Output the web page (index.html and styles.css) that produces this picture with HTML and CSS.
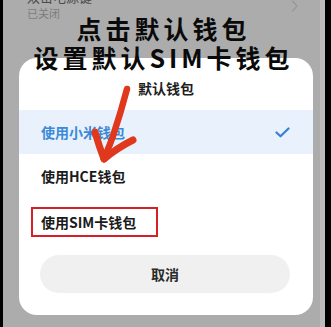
FILE: index.html
```html
<!DOCTYPE html>
<html lang="zh">
<head>
<meta charset="utf-8">
<title>默认钱包</title>
<link rel="stylesheet" href="styles.css">
</head>
<body>
<div class="screen">
  <div class="setting">
    <div class="setting-text">
      <div class="setting-title">双击电源键</div>
      <div class="setting-sub">已关闭</div>
    </div>
    <svg class="chevron" width="8" height="12" viewBox="0 0 8 12"><path d="M1.5 1 L6 6 L1.5 11" fill="none" stroke="#9a9a9a" stroke-width="1.6" stroke-linecap="round" stroke-linejoin="round"/></svg>
  </div>

  <div class="card">
    <div class="card-title">默认钱包</div>
    <div class="options">
      <div class="option selected">
        <span>使用小米钱包</span>
        <svg class="check" width="15" height="11" viewBox="0 0 15 11"><path d="M1.5 5.5 L5.5 9.3 L13.5 1.5" fill="none" stroke="#3a7fd4" stroke-width="2.2" stroke-linecap="round" stroke-linejoin="round"/></svg>
      </div>
      <div class="option"><span>使用HCE钱包</span></div>
      <div class="option"><span class="boxed">使用SIM卡钱包</span></div>
    </div>
    <div class="cancel">取消</div>
  </div>

  <div class="caption">
    <div>点击默认钱包</div>
    <div>设置默认SIM卡钱包</div>
  </div>

  <svg class="arrow" width="331" height="327" viewBox="0 0 331 327">
    <path d="M127 89 Q121 112 113 136 Q108 150 104 158" fill="none" stroke="#e0381c" stroke-width="6.5" stroke-linecap="round"/>
    <path d="M95 132 Q99 146 104 159" fill="none" stroke="#e0381c" stroke-width="7" stroke-linecap="round"/>
    <path d="M133 140 Q117 148 104 159" fill="none" stroke="#e0381c" stroke-width="7" stroke-linecap="round"/>
  </svg>
</div>
</body>
</html>
```

FILE: styles.css
```css
html, body {
  margin: 0;
  padding: 0;
}
body {
  width: 331px;
  height: 327px;
  background: #000;
  overflow: hidden;
  font-family: "Noto Sans CJK SC", "Noto Sans", sans-serif;
}
.screen {
  position: relative;
  margin-left: 3px;
  width: 317px;
  height: 327px;
  background: #acacac;
  border-right: 5px solid #bcbcbc;
}
.setting {
  display: flex;
  justify-content: space-between;
  align-items: flex-start;
  padding: 0 21px 0 24px;
  height: 58px;
}
.setting-text {
  margin-top: -12px;
}
.setting-title {
  font-size: 13px;
  line-height: 18px;
  color: #4a4a4a;
}
.setting-sub {
  font-size: 11px;
  line-height: 14px;
  color: #7c7c7c;
}
.card {
  margin-left: 16px;
  width: 294px;
  height: 257px;
  background: #fff;
  border-radius: 18px;
  display: flex;
  flex-direction: column;
}
.card-title {
  padding: 20px 0 12px;
  line-height: 20px;
  text-align: center;
  font-size: 14px;
  font-weight: 700;
  color: #1e1e1e;
}
.option {
  height: 44px;
  display: flex;
  align-items: center;
  justify-content: space-between;
  padding: 0 23px 0 22px;
  font-size: 14px;
  font-weight: 700;
  color: #1a1a1a;
}
.option.selected {
  background: #e8f1fc;
  color: #3b8ad8;
}
.boxed {
  margin-left: -10px;
  margin-top: 3px;
  padding: 4px 20px 4px 8px;
  border: 2px solid #d3202a;
  line-height: 18px;
}
.cancel {
  margin: 13px 23px 0 21px;
  height: 38px;
  border-radius: 19px;
  background: #f0f0f0;
  display: flex;
  align-items: center;
  justify-content: center;
  font-size: 14px;
  font-weight: 700;
  color: #2a2a2a;
}
.caption {
  position: absolute;
  left: 0;
  top: 14px;
  width: 317px;
  text-align: center;
  font-size: 25px;
  line-height: 29px;
  font-weight: 700;
  letter-spacing: 4px;
  padding-left: 4px;
  box-sizing: border-box;
  color: #0a0a0a;
}
.caption div {
  height: 29px;
}
.arrow {
  position: absolute;
  left: -3px;
  top: 0;
}
```
